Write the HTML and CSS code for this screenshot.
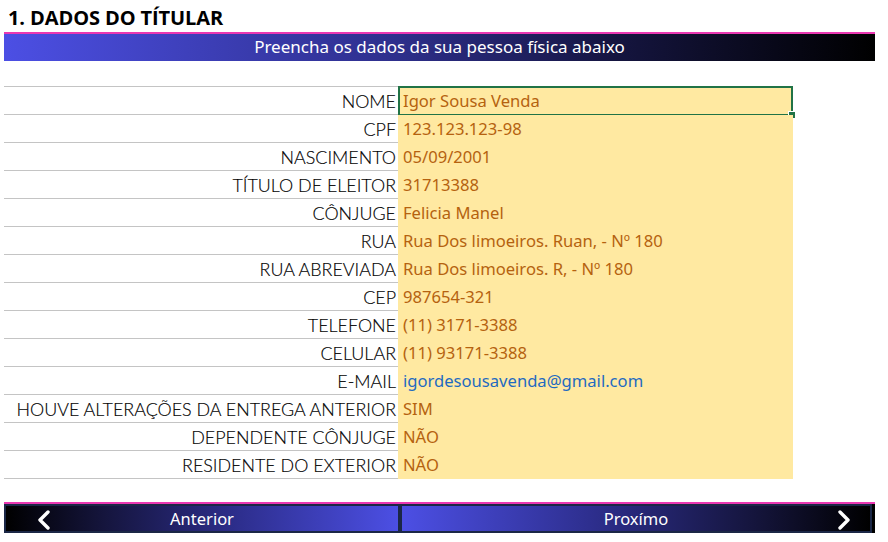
FILE: index.html
```html
<!DOCTYPE html>
<html lang="pt">
<head>
<meta charset="utf-8">
<link rel="stylesheet" href="styles.css">
</head>
<body>
<div class="page">
  <h1 class="title">1. DADOS DO TÍTULAR</h1>
  <div class="banner">Preencha os dados da sua pessoa física abaixo</div>
  <div class="table">
    <div class="row"><div class="label">NOME</div><div class="value selected">Igor Sousa Venda<span class="handle"></span></div></div>
    <div class="row"><div class="label">CPF</div><div class="value">123.123.123-98</div></div>
    <div class="row"><div class="label">NASCIMENTO</div><div class="value">05/09/2001</div></div>
    <div class="row"><div class="label">TÍTULO DE ELEITOR</div><div class="value">31713388</div></div>
    <div class="row"><div class="label">CÔNJUGE</div><div class="value">Felicia Manel</div></div>
    <div class="row"><div class="label">RUA</div><div class="value">Rua Dos limoeiros. Ruan, - Nº 180</div></div>
    <div class="row"><div class="label">RUA ABREVIADA</div><div class="value">Rua Dos limoeiros. R, - Nº 180</div></div>
    <div class="row"><div class="label">CEP</div><div class="value">987654-321</div></div>
    <div class="row"><div class="label">TELEFONE</div><div class="value">(11) 3171-3388</div></div>
    <div class="row"><div class="label">CELULAR</div><div class="value">(11) 93171-3388</div></div>
    <div class="row"><div class="label">E-MAIL</div><div class="value email">igordesousavenda@gmail.com</div></div>
    <div class="row"><div class="label">HOUVE ALTERAÇÕES DA ENTREGA ANTERIOR</div><div class="value">SIM</div></div>
    <div class="row"><div class="label">DEPENDENTE CÔNJUGE</div><div class="value">NÃO</div></div>
    <div class="row"><div class="label">RESIDENTE DO EXTERIOR</div><div class="value">NÃO</div></div>
  </div>
  <div class="nav">
    <div class="btn prev">
      <svg class="chev" width="16" height="20" viewBox="0 0 16 20"><path d="M12 2 L4 10 L12 18" fill="none" stroke="#fff" stroke-width="3.4" stroke-linecap="round" stroke-linejoin="round"/></svg>
      <span class="btn-text">Anterior</span>
    </div>
    <div class="btn next">
      <span class="btn-text">Proxímo</span>
      <svg class="chev" width="16" height="20" viewBox="0 0 16 20"><path d="M4 2 L12 10 L4 18" fill="none" stroke="#fff" stroke-width="3.4" stroke-linecap="round" stroke-linejoin="round"/></svg>
    </div>
  </div>
</div>
</body>
</html>
```
FILE: styles.css
```css
* { box-sizing: border-box; }
html, body { margin: 0; padding: 0; background: #fff; }
body { width: 888px; height: 542px; overflow: hidden; font-family: "Noto Sans", "Open Sans", sans-serif; }

.page { display: flex; flex-direction: column; padding: 0 0 0 4px; }

.title {
  margin: 0;
  padding: 6px 0 0 4px;
  height: 32px;
  font-family: "Open Sans", sans-serif;
  font-weight: 700;
  font-size: 20px;
  letter-spacing: -0.1px;
  line-height: 24px;
  color: #000;
}

.banner {
  width: 871px;
  height: 29px;
  border-top: 2px solid #ea38b2;
  background: linear-gradient(to right, #4c4fe4 0%, #2e2f8c 45%, #151540 70%, #000 100%);
  color: #fff;
  font-size: 17px;
  line-height: 26px;
  text-align: center;
}

.table {
  margin-top: 25px;
  width: 789px;
  border-top: 1px solid #c4c4c4;
  display: flex;
  flex-direction: column;
}

.row {
  display: grid;
  grid-template-columns: 394px 395px;
  height: 28px;
  border-bottom: 1px solid #c4c4c4;
}

.label {
  font-family: "Lato", sans-serif;
  font-weight: 300;
  font-size: 17.9px;
  color: #000;
  text-align: right;
  padding-right: 2px;
  line-height: 28px;
  -webkit-text-stroke: 0.15px #000;
}

.value {
  background: #ffe9a1;
  color: #b5620f;
  font-size: 16.6px;
  line-height: 28px;
  padding-left: 5px;
  position: relative;
}
.value.email { color: #1f6bc0; }

.value.selected {
  border: 2px solid #217346;
  margin-top: -1px;
  line-height: 26px;
  padding-left: 3px;
}
.handle {
  position: absolute;
  right: -5px;
  bottom: -5px;
  width: 8px;
  height: 8px;
  background: #217346;
  border: 1px solid #fff;
}

.nav {
  margin-top: 23px;
  width: 871px;
  border-top: 2px solid #ea38b2;
  display: grid;
  grid-template-columns: 396px 472px 3px;
  height: 31px;
  background: #000;
}

.btn {
  display: flex;
  align-items: center;
  height: 29px;
  border: 2px solid #1b2746;
  color: #fff;
  font-size: 16.5px;
  position: relative;
}
.btn.prev {
  background: linear-gradient(to right, #000 0%, #15153d 25%, #2e2f8f 60%, #4c4fe4 100%);
}
.btn.next {
  background: linear-gradient(to right, #4c4fe4 0%, #2e2f8f 40%, #15153d 75%, #000 100%);
}
.btn-text { flex: 1; text-align: center; line-height: 27px; }
.btn.prev .chev { position: absolute; left: 30px; top: 4px; }
.btn.next .chev { position: absolute; right: 18px; top: 4px; }
```
